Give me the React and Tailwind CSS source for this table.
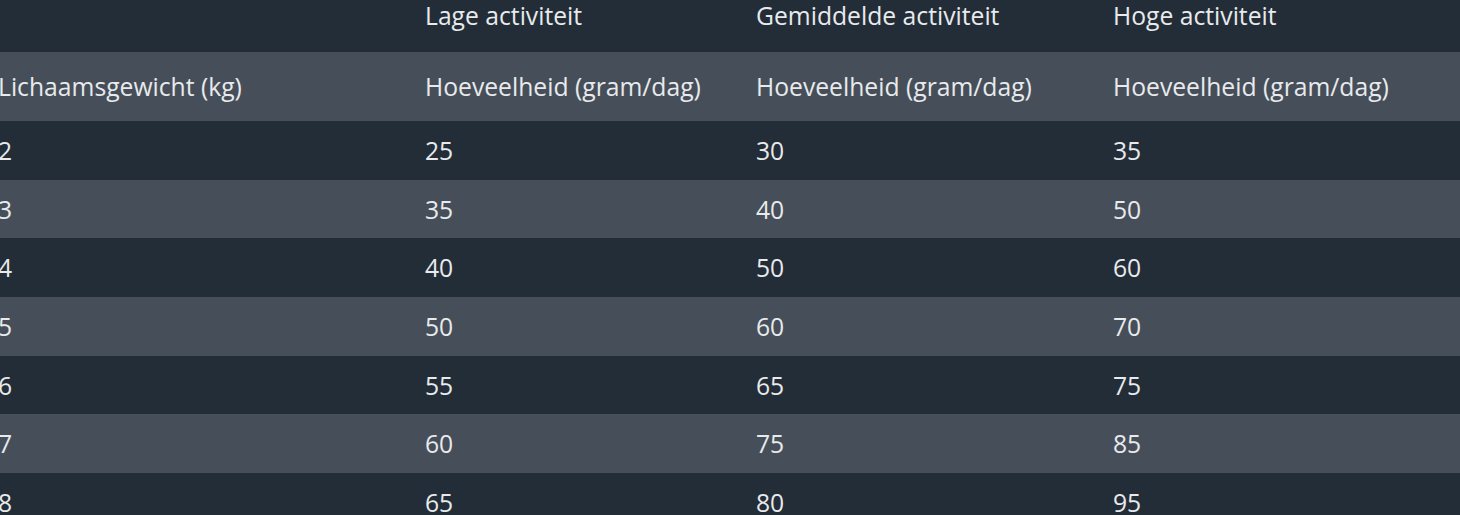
const header = ["", "Lage activiteit", "Gemiddelde activiteit", "Hoge activiteit"]
const subHeader = [
  "Lichaamsgewicht (kg)",
  "Hoeveelheid (gram/dag)",
  "Hoeveelheid (gram/dag)",
  "Hoeveelheid (gram/dag)",
]
const rows = [
  ["2", "25", "30", "35"],
  ["3", "35", "40", "50"],
  ["4", "40", "50", "60"],
  ["5", "50", "60", "70"],
  ["6", "55", "65", "75"],
  ["7", "60", "75", "85"],
  ["8", "65", "80", "95"],
]

const App = () => {
  return (
    <div className="w-[1460px] h-[515px] overflow-hidden bg-[#232d38]">
      <table
        className="-mt-[20px] w-full border-collapse text-[24.7px] text-[#e8eaec] table-fixed"
        style={{ fontFamily: '"Open Sans", "Noto Sans", sans-serif' }}
      >
        <colgroup>
          <col className="w-[425px]" />
          <col className="w-[331px]" />
          <col className="w-[357px]" />
          <col />
        </colgroup>
        <thead>
          <tr className="h-[72px] bg-[#232d38]">
            {header.map((h, i) => (
              <th key={i} className="text-left font-normal p-0 align-middle">
                {h}
              </th>
            ))}
          </tr>
          <tr className="h-[69px] bg-[#464f59]">
            {subHeader.map((h, i) => (
              <th
                key={i}
                className={`text-left font-normal p-0 align-middle ${i === 0 ? "-indent-[2px]" : ""}`}
              >
                {h}
              </th>
            ))}
          </tr>
        </thead>
        <tbody>
          {rows.map((r, i) => (
            <tr
              key={i}
              className={`h-[58.7px] ${i % 2 === 0 ? "bg-[#232d38]" : "bg-[#464f59]"}`}
            >
              {r.map((c, j) => (
                <td
                  key={j}
                  className={`p-0 align-middle ${j === 0 ? "-indent-[2px]" : ""}`}
                >
                  {c}
                </td>
              ))}
            </tr>
          ))}
        </tbody>
      </table>
    </div>
  )
}

export default App
